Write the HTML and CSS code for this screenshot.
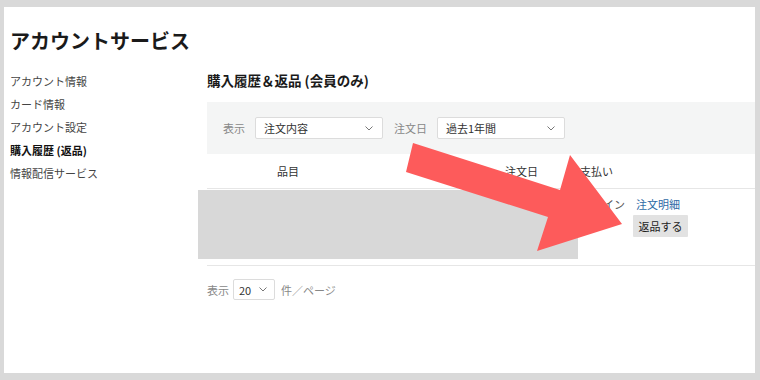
FILE: index.html
```html
<!DOCTYPE html>
<html lang="ja">
<head>
<meta charset="utf-8">
<title>アカウントサービス</title>
<link rel="stylesheet" href="styles.css">
</head>
<body>
<div class="frame">
  <h1 class="title">アカウントサービス</h1>
  <div class="layout">
    <nav class="side">
      <a class="side-item">アカウント情報</a>
      <a class="side-item">カード情報</a>
      <a class="side-item">アカウント設定</a>
      <a class="side-item active">購入履歴 (返品)</a>
      <a class="side-item">情報配信サービス</a>
    </nav>
    <main class="main">
      <h2 class="heading">購入履歴＆返品 (会員のみ)</h2>
      <div class="filter">
        <span class="label">表示</span>
        <div class="select wide"><span>注文内容</span><svg class="chev" width="8" height="5" viewBox="0 0 8 5"><polyline points="0.5,0.5 4,4 7.5,0.5" fill="none" stroke="#777" stroke-width="1"/></svg></div>
        <span class="label">注文日</span>
        <div class="select wide"><span>過去1年間</span><svg class="chev" width="8" height="5" viewBox="0 0 8 5"><polyline points="0.5,0.5 4,4 7.5,0.5" fill="none" stroke="#777" stroke-width="1"/></svg></div>
      </div>
      <div class="thead">
        <span class="th th-item">品目</span>
        <span class="th th-date">注文日</span>
        <span class="th th-pay">支払い</span>
      </div>
      <div class="trow">
        <div class="redact"></div>
        <div class="pay">オンライン</div>
        <div class="actions">
          <a class="link">注文明細</a>
          <button class="btn">返品する</button>
        </div>
      </div>
      <div class="pager">
        <span class="label">表示</span>
        <div class="select small"><span>20</span><svg class="chev" width="8" height="5" viewBox="0 0 8 5"><polyline points="0.5,0.5 4,4 7.5,0.5" fill="none" stroke="#777" stroke-width="1"/></svg></div>
        <span class="label">件／ページ</span>
      </div>
    </main>
  </div>
</div>
<svg class="arrow" width="760" height="380" viewBox="0 0 760 380">
  <polygon points="413,143 560,190 570,155 622,224 537,251 548,217 406,172" fill="#fd5b5b"/>
</svg>
</body>
</html>
```

FILE: styles.css
```css
* { box-sizing: border-box; }
html, body { margin: 0; padding: 0; }
body {
  width: 760px;
  height: 380px;
  background: #d9d9d9;
  font-family: "Noto Sans CJK JP", "Noto Sans", sans-serif;
  color: #333;
  overflow: hidden;
  position: relative;
}
.frame {
  margin: 7px 5px 0 4px;
  height: 366px;
  background: #fff;
  padding: 22px 0 0 6px;
  overflow: hidden;
}
.title {
  margin: 0;
  font-size: 20px;
  line-height: 24px;
  font-weight: 700;
  color: #1a1a1a;
}
.layout {
  display: flex;
  margin-top: 17px;
}
.side {
  width: 197px;
  flex: none;
  display: flex;
  flex-direction: column;
}
.side-item {
  font-size: 11px;
  line-height: 23px;
  color: #444;
}
.side-item.active {
  font-weight: 700;
  color: #111;
}
.main {
  flex: 1;
  min-width: 0;
}
.heading {
  margin: 0 0 12px;
  font-size: 13.5px;
  line-height: 20px;
  font-weight: 700;
  color: #1a1a1a;
}
.filter {
  height: 52px;
  background: #f4f5f5;
  display: flex;
  align-items: center;
  padding-left: 16px;
}
.label {
  font-size: 11px;
  color: #888;
}
.filter .label + .select { margin-left: 10px; }
.filter .select + .label { margin-left: 11px; }
.select {
  height: 22px;
  background: #fff;
  border: 1px solid #dcdcdc;
  border-radius: 2px;
  display: flex;
  align-items: center;
  justify-content: space-between;
  font-size: 11px;
  color: #333;
}
.select.wide {
  width: 128px;
  padding: 0 9px 0 8px;
}
.select.small {
  width: 42px;
  height: 21px;
  padding: 0 7px 0 5px;
  margin: 0 6px 0 4px;
}
.chev { display: block; }
.thead {
  height: 35px;
  border-bottom: 1px solid #e6e6e6;
  display: flex;
  align-items: center;
  font-size: 11px;
  color: #333;
}
.th-item {
  width: 162px;
  text-align: center;
}
.th-date {
  margin-left: 136px;
  width: 75px;
}
.trow {
  height: 77px;
  border-bottom: 1px solid #e6e6e6;
  display: flex;
  align-items: flex-start;
}
.redact {
  margin: 1px 0 0 -9px;
  width: 380px;
  height: 69px;
  background: #d8d8d8;
  flex: none;
}
.pay {
  margin-left: -8px;
  width: 55px;
  flex: none;
  padding-top: 7px;
  font-size: 11px;
  line-height: 16px;
  color: #555;
  white-space: nowrap;
}
.actions {
  margin-left: 8px;
  padding-top: 7px;
  display: flex;
  flex-direction: column;
  align-items: flex-start;
}
.link {
  padding-left: 3px;
  font-size: 11px;
  line-height: 16px;
  color: #2f6aa6;
}
.btn {
  margin-top: 3px;
  height: 22px;
  width: 55px;
  padding: 0;
  border: 0;
  border-radius: 1px;
  background: #e2e2e2;
  font-family: inherit;
  font-size: 11px;
  color: #222;
}
.pager {
  margin-top: 13px;
  display: flex;
  align-items: center;
}
.arrow {
  position: absolute;
  left: 0;
  top: 0;
  pointer-events: none;
}
```
